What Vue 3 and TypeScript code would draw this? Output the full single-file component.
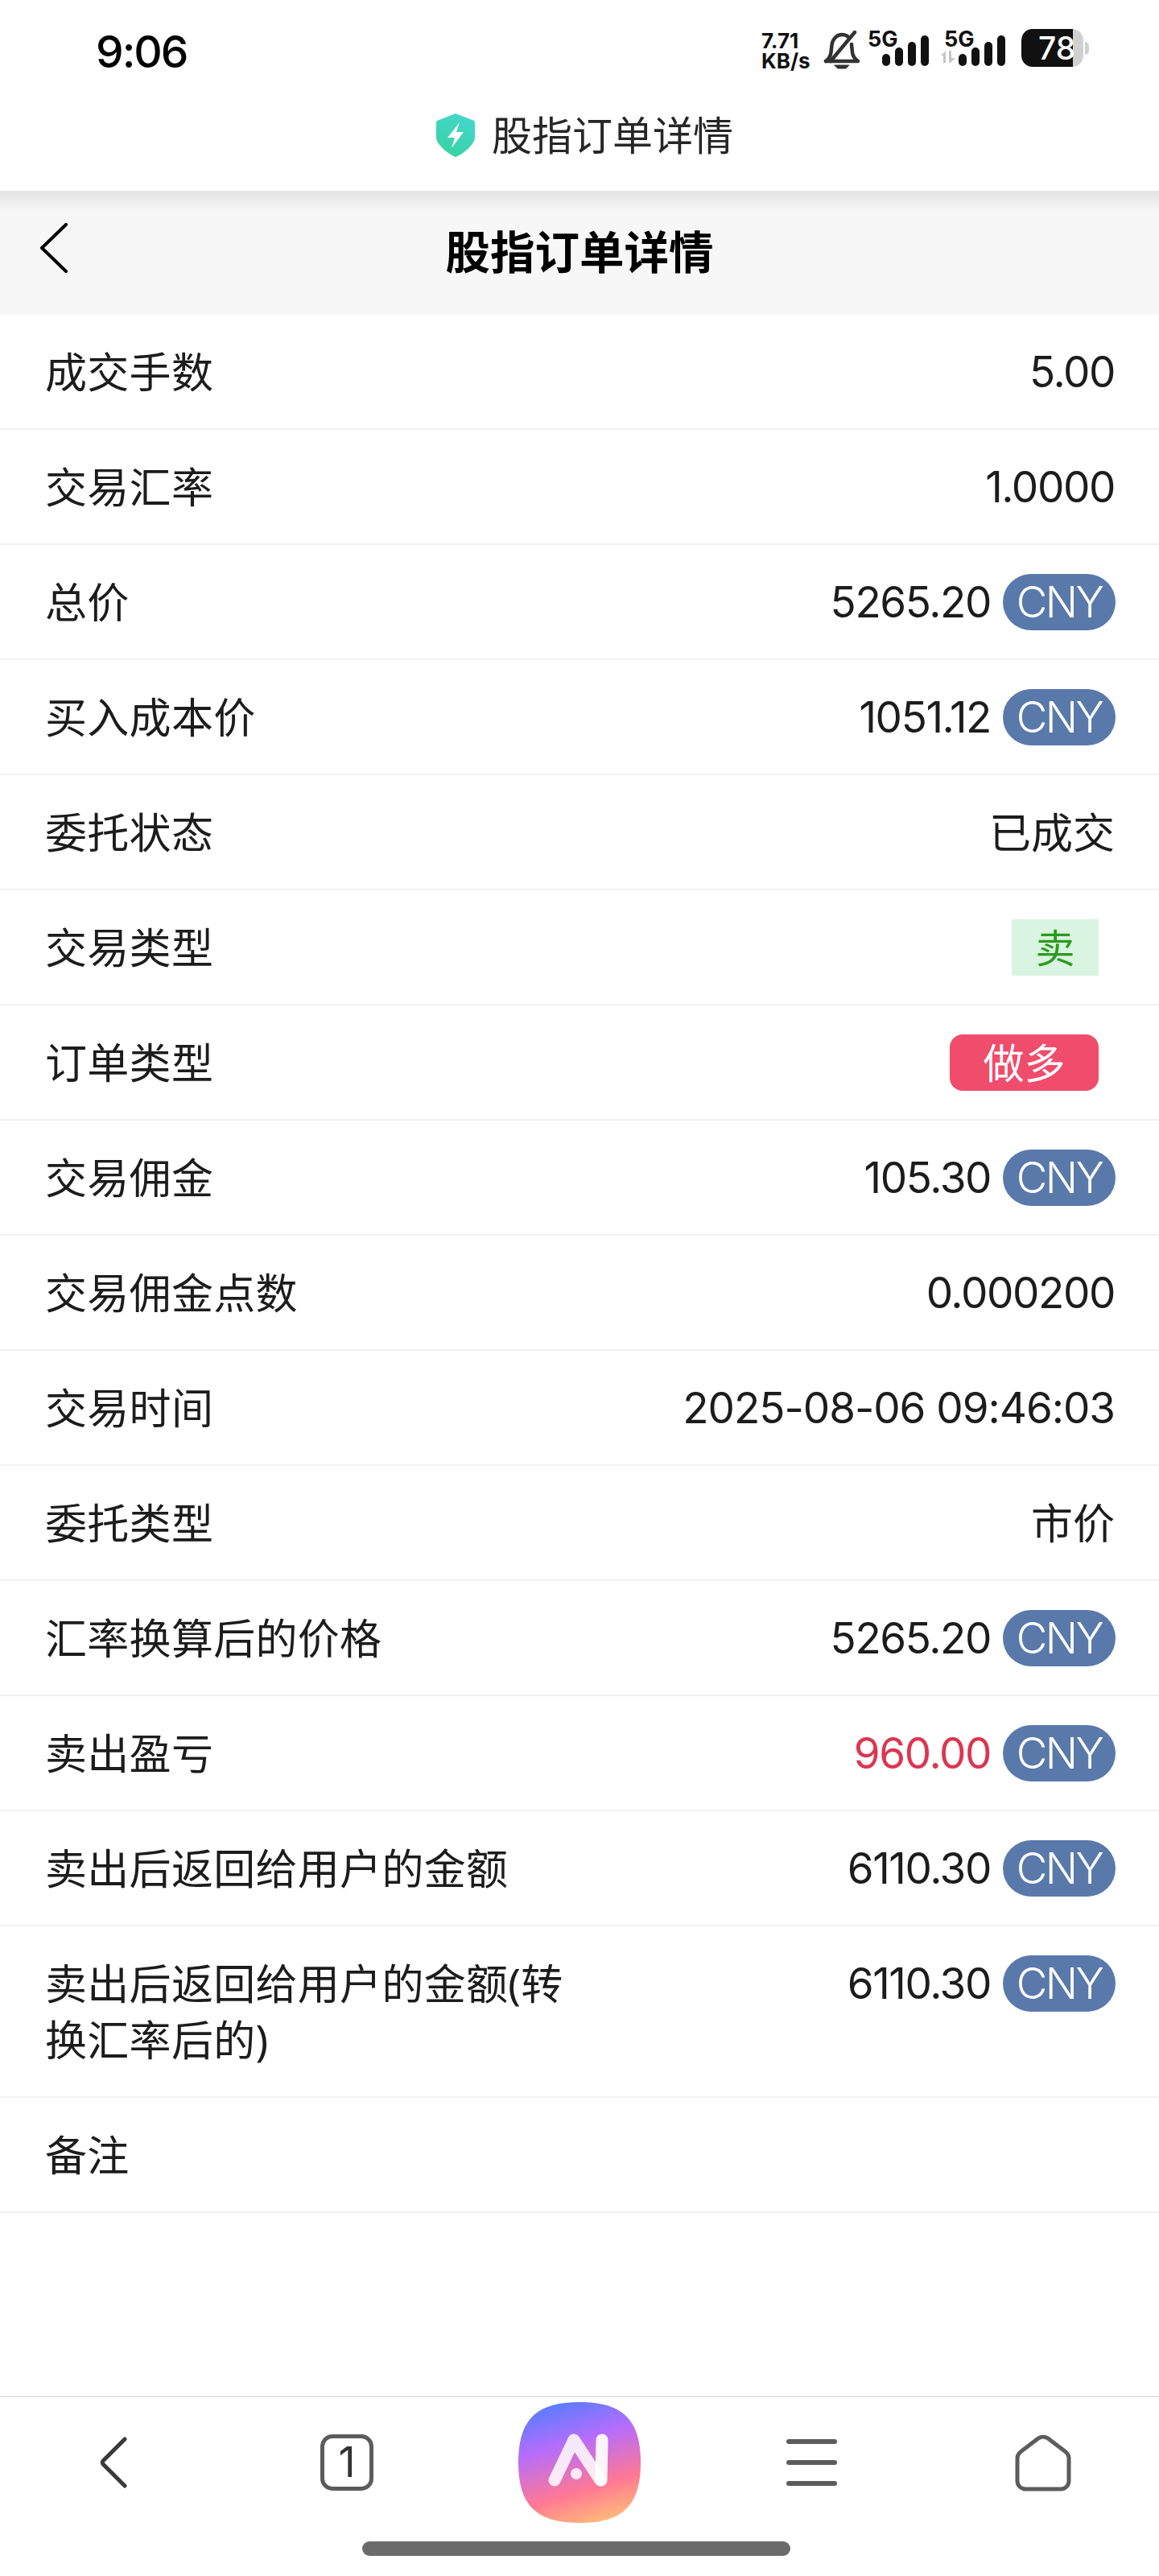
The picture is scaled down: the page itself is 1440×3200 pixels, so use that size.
<script setup lang="ts">
interface Row {
  label: string
  value?: string
  unit?: boolean
  red?: boolean
  badge?: 'sell' | 'long'
}
const rows: Row[] = [
  { label: '成交手数', value: '5.00' },
  { label: '交易汇率', value: '1.0000' },
  { label: '总价', value: '5265.20', unit: true },
  { label: '买入成本价', value: '1051.12', unit: true },
  { label: '委托状态', value: '已成交' },
  { label: '交易类型', badge: 'sell', value: '卖' },
  { label: '订单类型', badge: 'long', value: '做多' },
  { label: '交易佣金', value: '105.30', unit: true },
  { label: '交易佣金点数', value: '0.000200' },
  { label: '交易时间', value: '2025-08-06 09:46:03' },
  { label: '委托类型', value: '市价' },
  { label: '汇率换算后的价格', value: '5265.20', unit: true },
  { label: '卖出盈亏', value: '960.00', unit: true, red: true },
  { label: '卖出后返回给用户的金额', value: '6110.30', unit: true },
  { label: '卖出后返回给用户的金额(转换汇率后的)', value: '6110.30', unit: true },
  { label: '备注' }
]
const bars = [{ h: 15 }, { h: 23 }, { h: 30 }, { h: 38 }]
const isNum = (v: string): boolean => /^[\d.\-: ]+$/.test(v)
const isDate = (v: string): boolean => v.includes(':')
</script>

<template>
  <div class="screen">
    <header class="browser">
      <div class="status">
        <span class="time">9:06</span>
        <div class="status-icons">
          <span class="speed">7.71<br />KB/s</span>
          <svg class="bell" width="46" height="48" viewBox="0 0 46 48" fill="none" stroke="#333" stroke-width="4.500" stroke-linecap="round" stroke-linejoin="round">
            <path d="M3 38c4-3 6-6 6.500-11l1-9C11.500 10 17 5 23 5c3 0 6 1 8 3" />
            <path d="M35 17l1 10c.5 5 3 8 7 11H3" />
            <path d="M39 2L9 38" />
            <path d="M14 43h18l-4 4h-10z" fill="#333" stroke-width="1" />
          </svg>
          <div class="signal">
            <span class="g5">5G</span>
            <div class="bars">
              <i v-for="b in bars" :key="b.h" :style="{ height: b.h + 'px' }"></i>
            </div>
          </div>
          <div class="signal second">
            <span class="g5">5G</span>
            <svg class="arrows" width="20" height="15" viewBox="0 0 20 15" fill="#c4c4c4">
              <path d="M0 6l6-6v15H3V6zM10 0h3v9h5l-6 6h-2z" />
            </svg>
            <div class="bars">
              <i v-for="b in bars" :key="b.h" :style="{ height: b.h + 'px' }"></i>
            </div>
          </div>
          <div class="battery">
            <div class="cell">
              <div class="fill"></div>
              <span class="level">78</span>
            </div>
            <span class="tip"></span>
          </div>
        </div>
      </div>
      <div class="site">
        <svg width="48" height="54" viewBox="0 0 48 54">
          <defs>
            <linearGradient id="shield-fill" x1="0.8" y1="0" x2="0.4" y2="1">
              <stop offset="0" stop-color="#45d6cf" />
              <stop offset="1" stop-color="#38d3a3" />
            </linearGradient>
          </defs>
          <path d="M24 0l22 8.500c1 .4 2 1.500 2 3V30c0 8-14 20-24 24C14 50 0 38 0 30V11.500c0-1.500 1-2.600 2-3z" fill="url(#shield-fill)" />
          <path d="M29 11L14 30h9l-4 13 15-20h-9z" fill="#fff" />
        </svg>
        <span class="site-title">股指订单详情</span>
      </div>
    </header>

    <div class="page-head">
      <svg class="head-back" width="36" height="62" viewBox="0 0 36 62" fill="none" stroke="#000" stroke-width="4" stroke-linecap="round" stroke-linejoin="round">
        <path d="M33 2L3 31l30 29" />
      </svg>
      <h1 class="page-title">股指订单详情</h1>
    </div>

    <main class="list">
      <div v-for="row in rows" :key="row.label" class="row">
        <div class="label">{{ row.label }}</div>
        <div class="right">
          <span v-if="row.badge" class="badge" :class="row.badge">{{ row.value }}</span>
          <template v-else>
            <span
              v-if="row.value"
              class="value"
              :class="{ red: row.red, num: isNum(row.value), date: isDate(row.value) }"
            >{{ row.value }}</span>
            <span v-if="row.unit" class="unit">CNY</span>
          </template>
        </div>
      </div>
    </main>

    <footer class="nav">
      <div class="nav-grid">
        <div class="nav-cell">
          <svg class="nav-back" width="36" height="64" viewBox="0 0 36 64" fill="none" stroke="#3a3a3a" stroke-width="5" stroke-linecap="round" stroke-linejoin="round">
            <path d="M32 3L5 30c-1 1-1 3 0 4l27 27" />
          </svg>
        </div>
        <div class="nav-cell">
          <div class="tabs">1</div>
        </div>
        <div class="nav-cell">
          <svg width="152" height="150" viewBox="0 0 152 150">
            <defs>
              <linearGradient id="logo-fill" x1="0.35" y1="0" x2="0.65" y2="1">
                <stop offset="0" stop-color="#5b7cff" />
                <stop offset="0.33" stop-color="#b66dfb" />
                <stop offset="0.72" stop-color="#ff7894" />
                <stop offset="1" stop-color="#ffb97a" />
              </linearGradient>
            </defs>
            <path d="M76 0C130 0 152 22 152 75S130 150 76 150 0 128 0 75 22 0 76 0z" fill="url(#logo-fill)" />
            <path d="M45 97L69 47M69 47L102 97" fill="none" stroke="#fff" stroke-opacity="0.85" stroke-width="15" stroke-linecap="round" />
            <path d="M104 47L103 97" fill="none" stroke="#fff" stroke-opacity="0.92" stroke-width="15" stroke-linecap="round" />
            <circle cx="72" cy="89" r="7" fill="#fff" fill-opacity="0.85" />
          </svg>
        </div>
        <div class="nav-cell">
          <div class="menu"><i></i><i></i><i></i></div>
        </div>
        <div class="nav-cell">
          <svg class="nav-home" width="70" height="72" viewBox="0 0 70 72" fill="none" stroke="#5c5c5c" stroke-width="5" stroke-linejoin="round">
            <path d="M29 6c3.500-2.500 8.500-2.500 12 0L62 22c3 2.200 5 4.500 5 8v29c0 5-4 10-10 10H13C7 69 3 64 3 59V30c0-3.500 2-5.800 5-8z" />
          </svg>
        </div>
      </div>
      <div class="home-bar"></div>
    </footer>
  </div>
</template>

<style>
html,
body {
  margin: 0;
  background: #fff;
}
</style>

<style scoped>
.screen {
  width: 1440px;
  height: 3200px;
  display: flex;
  flex-direction: column;
  background: #fff;
  color: #1c1c1c;
  font-family: "Noto Sans", "Noto Sans CJK SC", sans-serif;
  overflow: hidden;
}
.browser {
  height: 237px;
  box-sizing: border-box;
  background: #fff;
}
.status {
  height: 138px;
  box-sizing: border-box;
  padding: 31px 87px 0 119px;
  display: flex;
  justify-content: space-between;
  align-items: flex-start;
}
.time {
  font-family: Inter, sans-serif;
  font-size: 55px;
  font-weight: 500;
  line-height: 66px;
  color: #000;
  letter-spacing: -2px;
}
.status-icons {
  display: flex;
  align-items: flex-start;
  padding-top: 7px;
}
.speed {
  width: 77px;
  font-family: Inter, sans-serif;
  font-size: 26px;
  line-height: 25px;
  font-weight: 700;
  color: #111;
}
.bell {
  display: block;
}
.signal {
  position: relative;
  width: 78px;
  height: 44px;
  margin-left: 9px;
}
.signal.second {
  margin-left: 17px;
}
.g5 {
  position: absolute;
  left: 0;
  top: -3px;
  font-family: Inter, sans-serif;
  font-weight: 700;
  font-size: 27px;
  line-height: 28px;
  color: #111;
}
.arrows {
  position: absolute;
  left: -4px;
  top: 25px;
}
.bars {
  position: absolute;
  left: 18px;
  top: 6px;
  height: 38px;
  display: flex;
  align-items: flex-end;
  gap: 6px;
}
.bars i {
  display: block;
  width: 10px;
  border-radius: 5px;
  background: #111;
}
.battery {
  display: flex;
  align-items: center;
  margin-left: 18px;
  margin-top: -2px;
}
.cell {
  position: relative;
  width: 77px;
  height: 47px;
  border-radius: 14px;
  overflow: hidden;
  background: #d0d0d0;
}
.fill {
  position: absolute;
  left: 0;
  top: 0;
  bottom: 0;
  width: 64px;
  background: #111;
}
.level {
  position: absolute;
  left: 21px;
  top: 0;
  color: #fff;
  font-family: Inter, sans-serif;
  font-size: 39px;
  line-height: 47px;
  font-weight: 500;
}
.tip {
  width: 5px;
  height: 16px;
  margin-left: 2px;
  border-radius: 0 5px 5px 0;
  background: #d0d0d0;
}
.site {
  display: flex;
  align-items: center;
  justify-content: center;
  gap: 21px;
  height: 60px;
  padding-left: 13px;
}
.site-title {
  font-size: 50px;
  line-height: 60px;
  color: #262626;
}
.page-head {
  position: relative;
  height: 154px;
  box-sizing: border-box;
  padding-top: 38px;
  background: linear-gradient(#e3e3e3 0, #f7f7f7 28px);
}
.head-back {
  position: absolute;
  left: 49px;
  top: 40px;
}
.page-title {
  margin: 0;
  text-align: center;
  font-size: 55.500px;
  line-height: 76px;
  font-weight: 700;
  color: #000;
}
.list {
  flex: 1;
}
.row {
  display: flex;
  justify-content: space-between;
  align-items: flex-start;
  box-sizing: border-box;
  padding: 0 55px 0 56px;
  border-bottom: 2px solid #f1f1f1;
  font-size: 52px;
  line-height: 70px;
}
.label {
  width: 660px;
  padding: 36px 0 35px;
  letter-spacing: 0.3px;
}
.right {
  display: flex;
  align-items: center;
  padding-top: 36px;
  white-space: nowrap;
}
.value.num {
  font-family: Inter, sans-serif;
  font-size: 53px;
  font-weight: 400;
  letter-spacing: -1.400px;
}
.value.date {
  letter-spacing: -1.050px;
}
.value.red {
  color: #dc3550;
}
.unit {
  margin: 0 -1px 0 15px;
  width: 140px;
  height: 70px;
  border-radius: 35px;
  background: #5a79ab;
  color: #fff;
  text-align: center;
  font-family: Inter, sans-serif;
  font-weight: 300;
  font-size: 53px;
  letter-spacing: -2.500px;
  line-height: 70px;
}
.badge {
  height: 70px;
  margin-right: 20px;
  line-height: 70px;
  text-align: center;
}
.badge.sell {
  width: 108px;
  font-size: 49px;
  background: #d9f4e0;
  color: #2a9c1c;
}
.badge.long {
  width: 185px;
  font-size: 51px;
  border-radius: 16px;
  background: #f04c6b;
  color: #fff;
}
.nav {
  height: 224px;
  box-sizing: border-box;
  border-top: 2px solid #e6e6e6;
}
.nav-grid {
  display: grid;
  grid-template-columns: repeat(5, 288px);
  height: 161px;
}
.nav-cell {
  display: flex;
  align-items: center;
  justify-content: center;
}
.nav-back {
  margin-right: 6px;
}
.tabs {
  width: 66px;
  height: 70px;
  margin-right: 2px;
  box-sizing: border-box;
  border: 5px solid #5c5c5c;
  border-radius: 15px;
  font-family: Inter, sans-serif;
  font-size: 52px;
  font-weight: 400;
  line-height: 60px;
  text-align: center;
  color: #333;
}
.menu {
  display: flex;
  flex-direction: column;
  gap: 20px;
}
.menu i {
  display: block;
  width: 63px;
  height: 6px;
  background: #5c5c5c;
  border-radius: 3px;
}
.home-bar {
  width: 532px;
  height: 18px;
  margin: 18px 0 0 450px;
  border-radius: 9px;
  background: #6b6b6b;
}
</style>
